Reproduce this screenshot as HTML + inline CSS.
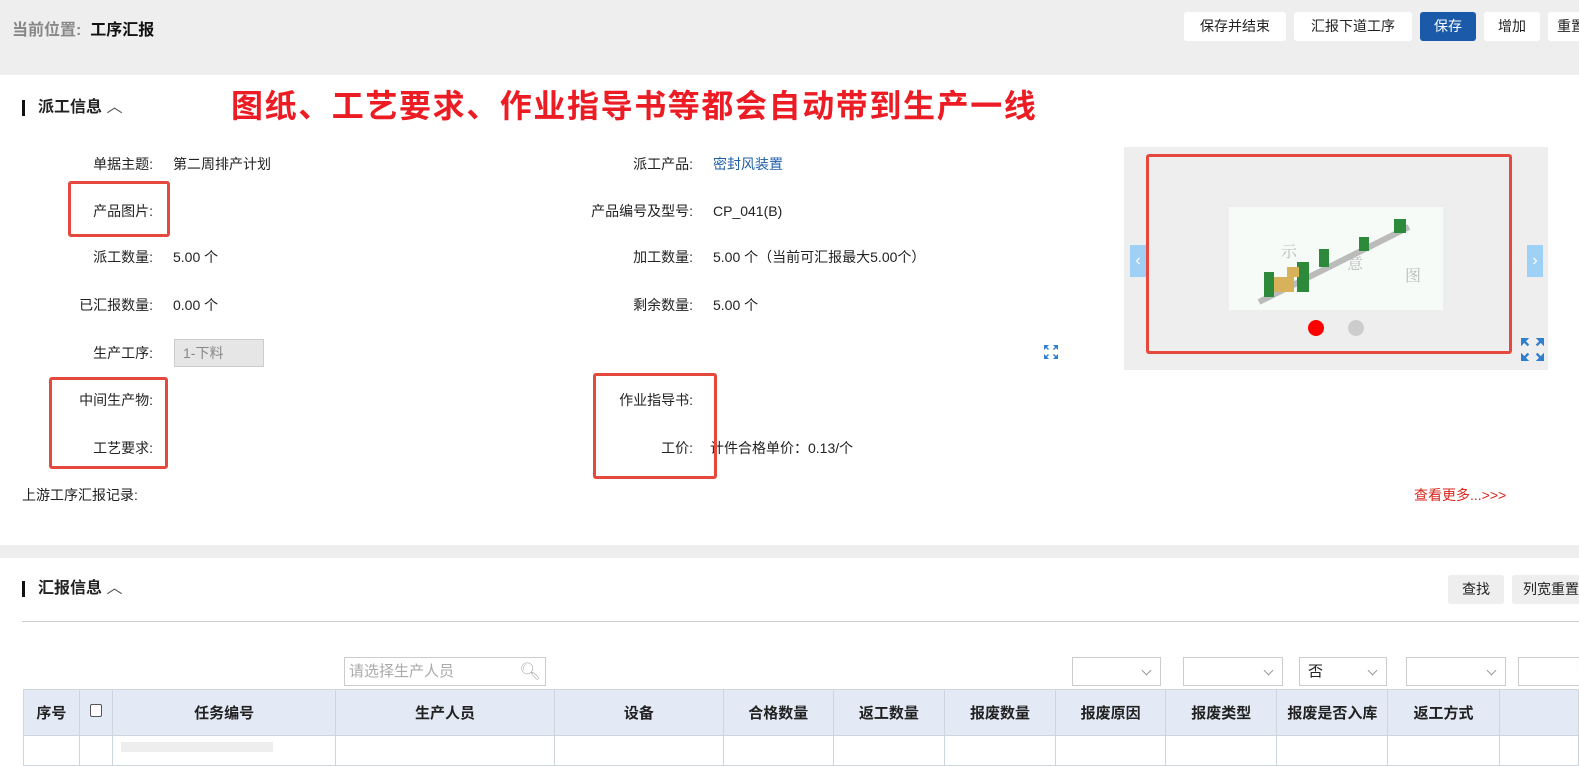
<!DOCTYPE html><html><head><meta charset="utf-8"><style>
*{margin:0;padding:0;box-sizing:border-box}
body{width:1579px;height:746px;overflow:hidden;background:#fff;font-family:"Liberation Sans","Noto Sans CJK SC",sans-serif;font-size:14px;color:#222;position:relative}
.a{position:absolute;white-space:nowrap}
.lb{position:absolute;text-align:right;white-space:nowrap;line-height:20px}
.v{position:absolute;white-space:nowrap;line-height:20px}
.btn{position:absolute;top:12px;height:29px;background:#fff;border-radius:3px;line-height:29px;text-align:center;font-size:14px;color:#222}
.rb{position:absolute;border:3px solid #e5493e;border-radius:3px}
table{position:absolute;left:23px;top:689px;border-collapse:collapse;table-layout:fixed}
td{border:1px solid #cfd5dd;height:46px;text-align:center;font-weight:bold;font-size:15px;background:#e3eaf5}
tr.r td{background:#fff;height:30px}
.sel{position:absolute;top:657px;height:29px;border:1px solid #ccc;background:#fff}
.sel:after{content:"";position:absolute;right:10px;top:9px;width:6px;height:6px;border-right:1px solid #999;border-bottom:1px solid #999;transform:rotate(45deg)}
</style></head><body>
<div class="a" style="left:0;top:0;width:1579px;height:75px;background:#eee"></div>
<div class="a" style="left:12px;top:20px;font-size:16px;line-height:22px"><span style="color:#888;font-weight:bold">当前位置:</span>&nbsp; <span style="font-weight:bold;color:#111">工序汇报</span></div>
<div class="btn" style="left:1184px;width:102px">保存并结束</div>
<div class="btn" style="left:1294px;width:118px">汇报下道工序</div>
<div class="btn" style="left:1420px;width:56px;background:#1b5aa8;color:#fff">保存</div>
<div class="btn" style="left:1484px;width:56px">增加</div>
<div class="btn" style="left:1548px;width:40px;text-align:left;padding-left:9px">重置</div>

<div class="a" style="left:22px;top:100px;width:3px;height:16px;background:#111"></div>
<div class="a" style="left:38px;top:97px;font-size:16px;font-weight:bold;line-height:22px">派工信息 <span style="font-weight:normal;color:#555">︿</span></div>
<div class="a" style="left:231px;top:86px;font-size:32px;letter-spacing:1.6px;font-weight:bold;color:#ec1c24;line-height:40px">图纸、工艺要求、作业指导书等都会自动带到生产一线</div>

<div class="lb" style="right:1426px;top:154px">单据主题:</div><div class="v" style="left:173px;top:154px">第二周排产计划</div>
<div class="lb" style="right:1426px;top:201px">产品图片:</div>
<div class="lb" style="right:1426px;top:247px">派工数量:</div><div class="v" style="left:173px;top:247px">5.00 个</div>
<div class="lb" style="right:1426px;top:295px">已汇报数量:</div><div class="v" style="left:173px;top:295px">0.00 个</div>
<div class="lb" style="right:1426px;top:343px">生产工序:</div>
<div class="a" style="left:174px;top:339px;width:90px;height:28px;background:#e6e6e6;border:1px solid #ccc;color:#888;line-height:26px;padding-left:8px">1-下料</div>
<div class="lb" style="right:1426px;top:390px">中间生产物:</div>
<div class="lb" style="right:1426px;top:438px">工艺要求:</div>
<div class="lb" style="left:22px;top:485px">上游工序汇报记录:</div>

<div class="lb" style="right:886px;top:154px">派工产品:</div><div class="v" style="left:713px;top:154px;color:#1f5fa8">密封风装置</div>
<div class="lb" style="right:886px;top:201px">产品编号及型号:</div><div class="v" style="left:713px;top:201px">CP_041(B)</div>
<div class="lb" style="right:886px;top:247px">加工数量:</div><div class="v" style="left:713px;top:247px">5.00 个（当前可汇报最大5.00个）</div>
<div class="lb" style="right:886px;top:295px">剩余数量:</div><div class="v" style="left:713px;top:295px">5.00 个</div>
<div class="lb" style="right:886px;top:390px">作业指导书:</div>
<div class="lb" style="right:886px;top:438px">工价:</div><div class="v" style="left:710px;top:438px">计件合格单价：0.13/个</div>
<div class="v" style="left:1414px;top:485px;color:#d9251c">查看更多...&gt;&gt;&gt;</div>

<div class="rb" style="left:68px;top:181px;width:102px;height:56px"></div>
<div class="rb" style="left:49px;top:377px;width:119px;height:92px"></div>
<div class="rb" style="left:593px;top:373px;width:124px;height:106px"></div>

<svg class="a" style="left:1044px;top:345px" width="14" height="14" viewBox="0 0 14 14" fill="#2f7fd0"><path d="M0 0h5l-2 2 2 2-1 1-2-2-2 2zM14 0v5l-2-2-2 2-1-1 2-2-2-2zM0 14v-5l2 2 2-2 1 1-2 2 2 2zM14 14h-5l2-2-2-2 1-1 2 2 2-2z"/></svg>

<div class="a" style="left:1124px;top:147px;width:424px;height:223px;background:#eee"></div>
<div class="rb" style="left:1146px;top:154px;width:366px;height:200px;border-width:3px"></div>
<div class="a" style="left:1229px;top:207px;width:214px;height:103px;background:#f6fbf8;overflow:hidden">
<svg width="214" height="103"><path d="M30 95 L180 20" stroke="#bbb" stroke-width="6"/><rect x="35" y="65" width="10" height="25" fill="#2c8a3a"/><rect x="68" y="55" width="12" height="30" fill="#2c8a3a"/><rect x="90" y="42" width="10" height="18" fill="#2c8a3a"/><rect x="130" y="30" width="10" height="14" fill="#2c8a3a"/><rect x="165" y="12" width="12" height="14" fill="#2c8a3a"/><rect x="45" y="70" width="20" height="15" fill="#d8b25a"/><rect x="58" y="60" width="12" height="10" fill="#d8b25a"/><text x="52" y="50" font-size="16" fill="#bbb" font-family="Noto Serif CJK SC">示</text><text x="118" y="62" font-size="16" fill="#bbb" font-family="Noto Serif CJK SC">意</text><text x="176" y="74" font-size="16" fill="#bbb" font-family="Noto Serif CJK SC">图</text></svg></div>
<div class="a" style="left:1308px;top:320px;width:16px;height:16px;border-radius:50%;background:#f00"></div>
<div class="a" style="left:1348px;top:320px;width:16px;height:16px;border-radius:50%;background:#ccc"></div>
<div class="a" style="left:1130px;top:245px;width:16px;height:32px;background:#9fd0f6;color:#fff;text-align:center;line-height:32px;font-size:16px">‹</div>
<div class="a" style="left:1527px;top:245px;width:16px;height:32px;background:#9fd0f6;color:#fff;text-align:center;line-height:32px;font-size:16px">›</div>
<svg class="a" style="left:1521px;top:338px" width="23" height="23" viewBox="0 0 14 14" fill="#2f7fd0"><path d="M0 0h5l-2 2 2 2-1 1-2-2-2 2zM14 0v5l-2-2-2 2-1-1 2-2-2-2zM0 14v-5l2 2 2-2 1 1-2 2 2 2zM14 14h-5l2-2-2-2 1-1 2 2 2-2z"/></svg>

<div class="a" style="left:0;top:545px;width:1579px;height:13px;background:#eee"></div>

<div class="a" style="left:22px;top:581px;width:3px;height:16px;background:#111"></div>
<div class="a" style="left:38px;top:578px;font-size:16px;font-weight:bold;line-height:22px">汇报信息 <span style="font-weight:normal;color:#555">︿</span></div>
<div class="a" style="left:1448px;top:575px;width:56px;height:29px;background:#eee;border-radius:3px;text-align:center;line-height:29px">查找</div>
<div class="a" style="left:1512px;top:575px;width:80px;height:29px;background:#eee;border-radius:3px;line-height:29px;padding-left:11px">列宽重置</div>
<div class="a" style="left:22px;top:621px;width:1557px;height:1px;background:#ccc"></div>

<div class="a" style="left:344px;top:657px;width:202px;height:29px;border:1px solid #ccc;color:#aaa;line-height:27px;padding-left:4px;font-size:15px">请选择生产人员<span style="position:absolute;right:4px;top:0;font-size:17px">&#x1F50D;&#xFE0E;</span></div>
<div class="sel" style="left:1072px;width:89px"></div>
<div class="sel" style="left:1183px;width:100px"></div>
<div class="sel" style="left:1299px;width:88px;padding-left:8px;line-height:27px;font-size:15px">否</div>
<div class="sel" style="left:1406px;width:100px"></div>
<div class="sel" style="left:1518px;width:80px"></div>

<table><colgroup><col style="width:56px"><col style="width:34px"><col style="width:223px"><col style="width:221px"><col style="width:170px"><col style="width:111px"><col style="width:112px"><col style="width:112px"><col style="width:111px"><col style="width:112px"><col style="width:112px"><col style="width:112px"><col style="width:80px"></colgroup>
<tr><td>序号</td><td><span style="display:inline-block;width:12px;height:13px;border:1px solid #555;border-radius:2px;background:#fff"></span></td><td>任务编号</td><td>生产人员</td><td>设备</td><td>合格数量</td><td>返工数量</td><td>报废数量</td><td>报废原因</td><td>报废类型</td><td>报废是否入库</td><td>返工方式</td><td></td></tr>
<tr class="r"><td></td><td></td><td style="text-align:left;padding-left:8px"><span style="display:inline-block;width:152px;height:10px;background:#eee;vertical-align:top"></span></td><td></td><td></td><td></td><td></td><td></td><td></td><td></td><td></td><td></td><td></td></tr></table>
</body></html>
